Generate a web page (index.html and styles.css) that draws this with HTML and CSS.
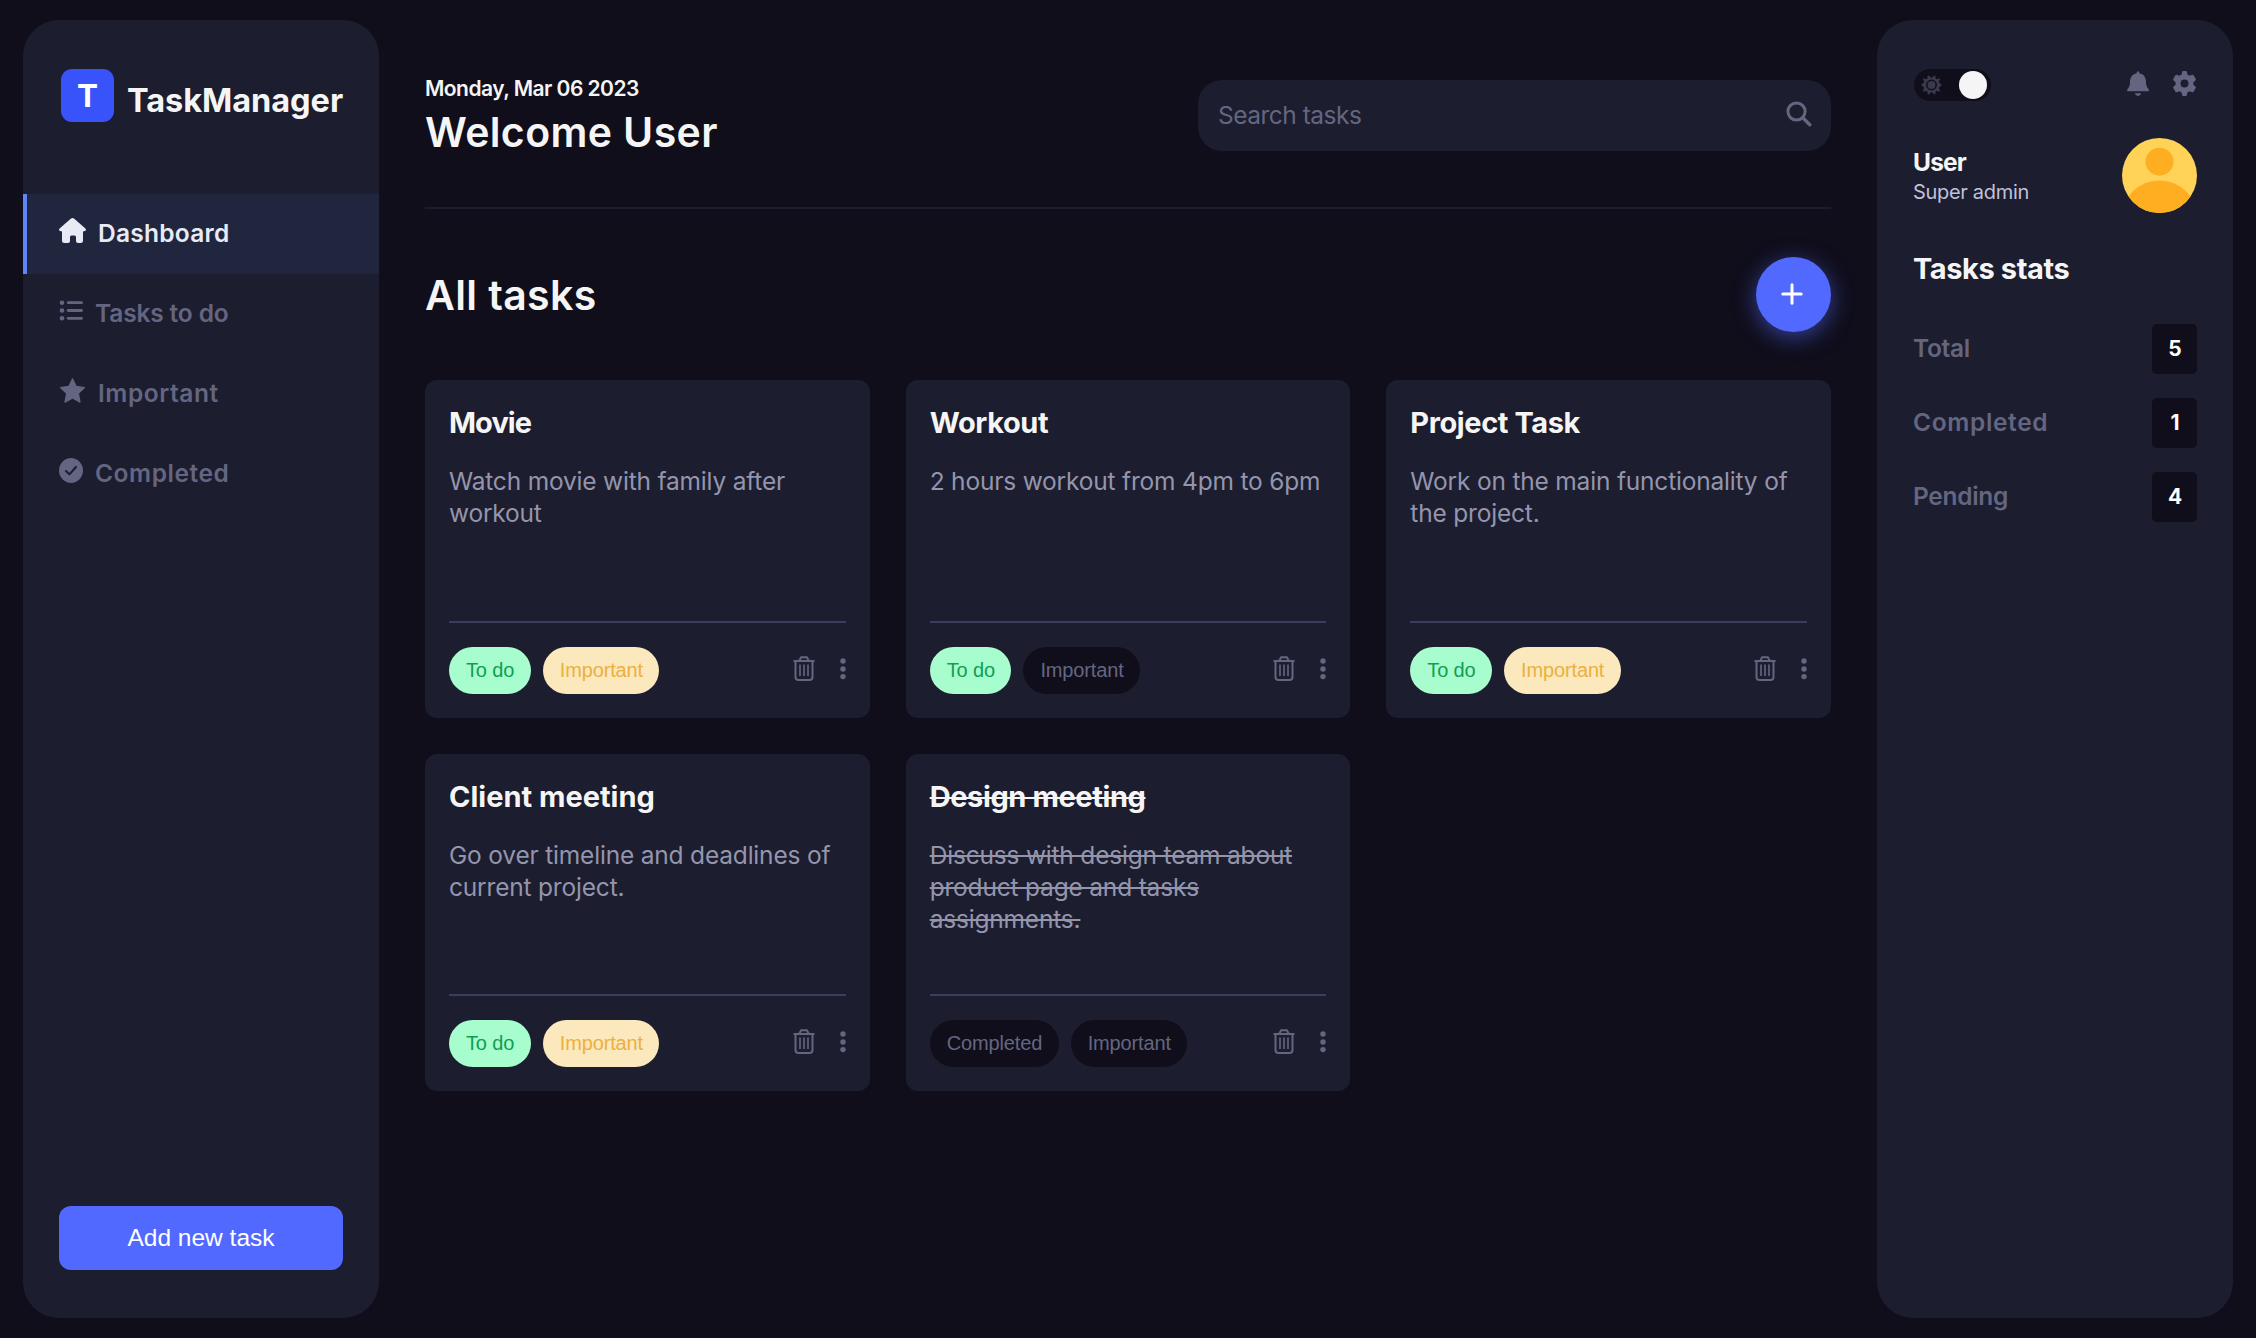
FILE: index.html
```html
<!DOCTYPE html>
<html lang="en">
<head>
<meta charset="utf-8">
<title>TaskManager</title>
<link rel="stylesheet" href="styles.css">
</head>
<body>
<svg class="defs" aria-hidden="true">
  <symbol id="trash" viewBox="0 0 22 25">
    <path d="M0.5 5H21.5M6 5L8.2 1.2H13.8L16 5M2.5 5V21Q2.5 24 5.5 24H16.5Q19.5 24 19.5 21V5" fill="none" stroke="currentColor" stroke-width="2"/>
    <path d="M7 8.5V20M11 8.5V20M15 8.5V20" stroke="currentColor" stroke-width="1.6"/>
  </symbol>
  <symbol id="dots" viewBox="0 0 6 22">
    <circle cx="3" cy="3" r="2.7"/><circle cx="3" cy="11" r="2.7"/><circle cx="3" cy="18.6" r="2.7"/>
  </symbol>
</svg>
<div class="app">
  <aside class="sidebar">
    <div class="brand">
      <span class="logo">T</span>
      <span class="brand-name">TaskManager</span>
    </div>
    <nav class="nav">
      <a class="nav-item active">
        <svg width="27" height="25" viewBox="0 0 27 25"><path d="M12 .6Q13.500-.5 15 .6L26.400 10.600Q27.300 11.700 26.800 12.600Q26.300 13.400 24 13.400V22.500Q24 25 21.500 25H19Q17 25 17 23V19Q17 17.500 15.500 17.500H12.500Q11 17.500 11 19V23Q11 25 9 25H5.500Q3 25 3 22.500V13.400Q.7 13.400 .2 12.600Q-.3 11.700 .6 10.600Z"/></svg>
        <span>Dashboard</span>
      </a>
      <a class="nav-item">
        <svg width="24" height="25" viewBox="0 0 24 25"><circle cx="3" cy="4.700" r="2.300"/><circle cx="3" cy="12.500" r="2.300"/><circle cx="3" cy="20.300" r="2.300"/><path d="M9.200 4.700H22.600M9.200 12.500H22.600M9.200 20.300H22.600" stroke="currentColor" stroke-width="2.800" stroke-linecap="round"/></svg>
        <span class="snug">Tasks to do</span>
      </a>
      <a class="nav-item">
        <svg width="27" height="25" viewBox="0 0 27 25"><path d="M13.500 .8L17.200 8.400L25.500 9.500L19.400 15.300L21 24.200L13.500 20L6 24.200L7.600 15.300L1.500 9.500L9.800 8.400Z" stroke="currentColor" stroke-width="1.200" stroke-linejoin="round"/></svg>
        <span class="wide">Important</span>
      </a>
      <a class="nav-item">
        <svg width="24" height="25" viewBox="0 0 24 25"><ellipse cx="12" cy="12.500" rx="12" ry="12.500"/><path class="cut" d="M7 13L10.400 16.400L17 9" fill="none" stroke-width="2" stroke-linecap="round" stroke-linejoin="round"/></svg>
        <span class="wide">Completed</span>
      </a>
    </nav>
    <button class="add-task">Add new task</button>
  </aside>

  <main class="main">
    <header class="header">
      <div>
        <div class="date">Monday, Mar 06 2023</div>
        <h1 class="heading">Welcome User</h1>
      </div>
      <div class="search">
        <span>Search tasks</span>
        <svg width="26" height="26" viewBox="0 0 26 26"><circle cx="10.500" cy="10.500" r="8.600" stroke="currentColor" stroke-width="3"/><path d="M16.800 16.800L23.800 23.800" stroke="currentColor" stroke-width="3.400" stroke-linecap="round"/></svg>
      </div>
    </header>
    <div class="section-head">
      <h2 class="heading">All tasks</h2>
      <button class="fab"><svg width="22" height="22" viewBox="0 0 22 22"><path d="M11 1.800V20.200M1.800 11H20.200" stroke="currentColor" stroke-width="3" stroke-linecap="round"/></svg></button>
    </div>
    <section class="grid">
      <article class="card">
        <h3 class="tight">Movie</h3>
        <p>Watch movie with family after workout</p>
        <footer><span class="tag todo">To do</span><span class="tag important">Important</span>
          <svg class="trash"><use href="#trash"/></svg><svg class="dots"><use href="#dots"/></svg></footer>
      </article>
      <article class="card">
        <h3>Workout</h3>
        <p>2 hours workout from 4pm to 6pm</p>
        <footer><span class="tag todo">To do</span><span class="tag">Important</span>
          <svg class="trash"><use href="#trash"/></svg><svg class="dots"><use href="#dots"/></svg></footer>
      </article>
      <article class="card">
        <h3>Project Task</h3>
        <p>Work on the main functionality of the project.</p>
        <footer><span class="tag todo">To do</span><span class="tag important">Important</span>
          <svg class="trash"><use href="#trash"/></svg><svg class="dots"><use href="#dots"/></svg></footer>
      </article>
      <article class="card">
        <h3 class="loose">Client meeting</h3>
        <p>Go over timeline and deadlines of current project.</p>
        <footer><span class="tag todo">To do</span><span class="tag important">Important</span>
          <svg class="trash"><use href="#trash"/></svg><svg class="dots"><use href="#dots"/></svg></footer>
      </article>
      <article class="card done">
        <h3>Design meeting</h3>
        <p>Discuss with design team about product page and tasks assignments.</p>
        <footer><span class="tag">Completed</span><span class="tag">Important</span>
          <svg class="trash"><use href="#trash"/></svg><svg class="dots"><use href="#dots"/></svg></footer>
      </article>
    </section>
  </main>

  <aside class="panel">
    <div class="tools">
      <div class="toggle">
        <svg width="21" height="20" viewBox="0 0 21 20"><path d="M10.500 3L14 0L14.900 4.200L19.300 3.300L17.800 7.200L21 10L17.800 12.800L19.300 16.700L14.900 15.800L14 20L10.500 17L7 20L6.100 15.800L1.700 16.700L3.200 12.800L0 10L3.200 7.200L1.700 3.300L6.100 4.200L7 0Z"/><circle class="ring" cx="10.500" cy="10" r="4.700" fill="none" stroke-width="1.500"/></svg>
        <span class="knob"></span>
      </div>
      <svg width="22" height="25" viewBox="0 0 22 25"><path d="M9.700 1.300Q11-1 12.300 1.300V2.200Q18.500 3.500 19 10V13Q19.500 16 21.600 18.200Q22.400 20.300 21 20.300H1Q-.4 20.300 .4 18.200Q2.500 16 3 13V10Q3.500 3.500 9.700 2.200ZM7.800 22.200H14.200Q13.500 25 11 25Q8.500 25 7.800 22.200Z"/></svg>
      <svg width="23" height="25" viewBox="0 0 23 25"><path fill-rule="evenodd" d="M10.200 0H12.800Q13.700 0 13.900 1L14.300 3.400L16.600 4.700L19 3.800Q20 3.500 20.600 4.300L22.700 7.900Q23.200 8.800 22.400 9.500L20.400 11.200V13.800L22.400 15.500Q23.200 16.200 22.700 17.100L20.600 20.700Q20 21.500 19 21.200L16.600 20.300L14.300 21.600L13.900 24Q13.700 25 12.800 25H10.200Q9.300 25 9.100 24L8.700 21.600L6.400 20.300L4 21.200Q3 21.500 2.400 20.700L.3 17.100Q-.2 16.200 .6 15.500L2.600 13.800V11.200L.6 9.500Q-.2 8.800 .3 7.900L2.400 4.300Q3 3.500 4 3.800L6.400 4.700L8.700 3.400L9.100 1Q9.300 0 10.200 0ZM11.500 8.500A4 4 0 1 0 11.500 16.500A4 4 0 1 0 11.500 8.500Z"/></svg>
    </div>
    <div class="profile">
      <div>
        <div class="user-name">User</div>
        <div class="role">Super admin</div>
      </div>
      <svg width="75" height="75" viewBox="0 0 75 75"><defs><clipPath id="face"><circle cx="37.500" cy="37.500" r="37.500"/></clipPath></defs><g clip-path="url(#face)"><rect width="75" height="75" fill="#ffd357"/><circle cx="37.500" cy="23.700" r="14" fill="#ffae22"/><ellipse cx="37.500" cy="80" rx="38" ry="37.500" fill="#ffae22"/></g></svg>
    </div>
    <h3 class="stats-title">Tasks stats</h3>
    <div class="stats">
      <div class="stat"><span>Total</span><b>5</b></div>
      <div class="stat"><span class="wide">Completed</span><b>1</b></div>
      <div class="stat"><span>Pending</span><b>4</b></div>
    </div>
  </aside>
</div>
</body>
</html>
```
FILE: styles.css
```css
* { box-sizing: border-box; margin: 0; }
body { background: #100e1b; color: #f5f5f5; font-family: Inter, sans-serif; font-size: 24.5px; }
svg { display: block; flex: none; fill: currentColor; }
.defs { display: none; }
button { border: 0; background: #5269ff; color: #fff; padding: 0; }

.app { display: grid; grid-template-columns: 356px 1fr 356px; height: 1338px; padding: 20px 23px; }

.sidebar, .panel { background: #1c1d2e; border-radius: 36px; display: flex; flex-direction: column; }

.brand { height: 174px; display: flex; align-items: flex-start; gap: 13px; padding: 49px 0 0 38px; }
.logo { width: 53px; height: 53px; border-radius: 11px; background: #3853fa; color: #fff; font: 700 31.5px/54px Inter, sans-serif; text-align: center; }
.brand-name { font-size: 32.5px; font-weight: 700; line-height: 40px; letter-spacing: -.05px; margin-top: 12px; }

.nav { flex: 1; }
.nav-item { display: flex; align-items: center; gap: 12px; height: 80px; padding: 0 0 2px 36px; color: #646681; font-weight: 600; letter-spacing: .26px; }
.nav-item svg { margin-bottom: 5px; }
.nav-item .cut { stroke: #1c1d2e; }
.nav-item.active { background: #20263e; color: #e8eaf6; box-shadow: inset 4px 0 #5f83f8; }
.wide { letter-spacing: .55px; }
.snug { letter-spacing: -.15px; }

.add-task { height: 64px; margin: 0 36px 48px; border-radius: 12px; font: 24.5px "Liberation Sans", Arial, sans-serif; }

.main { padding: 0 46px; }
.header { display: flex; justify-content: space-between; align-items: flex-start; height: 189px; padding-top: 56px; border-bottom: 2px solid #1c1d2e; }
.date { font-size: 21px; font-weight: 600; line-height: 26px; letter-spacing: -.53px; margin-bottom: 6px; }
.heading { font-size: 41px; font-weight: 600; line-height: 48px; letter-spacing: .38px; }
.search { display: flex; justify-content: space-between; align-items: center; width: 633px; height: 71px; margin-top: 4px; padding: 0 19px 2px 20px; border-radius: 24px; background: #1c1d2e; color: #646681; letter-spacing: -.5px; }
.search svg { fill: none; margin-bottom: 1px; }
.section-head { display: flex; justify-content: space-between; align-items: center; margin: 48px 0; }
.fab { display: flex; align-items: center; justify-content: center; width: 75px; height: 75px; border-radius: 50%; padding: 0 3px 2px 0; box-shadow: 0 5px 22px rgba(82, 105, 255, .55); }

.grid { display: grid; grid-template-columns: repeat(3, 1fr); grid-template-rows: 338px 337px; gap: 36px; }
.card { display: flex; flex-direction: column; background: #1c1d2e; border-radius: 12px; padding: 25px 24px 24px; }
.card h3, .stats-title { font-size: 29px; font-weight: 700; line-height: 36px; letter-spacing: -.4px; }
.card h3.tight { letter-spacing: -.95px; }
.card h3.loose { letter-spacing: 0; }
.card p { flex: 1; margin-top: 24px; color: #9495ad; line-height: 32px; letter-spacing: -.19px; }
.card footer { display: flex; align-items: flex-start; gap: 12px; height: 73px; padding-top: 24px; border-top: 2px solid #3c3d5e; }
.card.done h3, .card.done p { text-decoration: line-through; text-decoration-thickness: 2px; }
.tag { height: 47px; padding: 0 16.500px 0 17px; border-radius: 24px; background: #100e1b; color: #646681; font: 20px/46px "Liberation Sans", Arial, sans-serif; letter-spacing: -.14px; }
.tag.todo { background: #a7fdcd; color: #0e9f54; }
.tag.important { background: #fbe8bd; color: #ecb040; }
.trash { width: 22px; height: 25px; margin: 9px 13px 0 auto; color: #646681; }
.dots { width: 6px; height: 22px; margin-top: 11px; color: #646681; }

.panel { padding: 49px 36px 0; }
.tools { display: flex; align-items: center; height: 32px; color: #646681; }
.tools > svg { margin: 0 1px 4px 23px; }
.toggle { display: flex; align-items: center; justify-content: space-between; width: 77px; height: 32px; margin: 0 auto 0 1px; padding: 0 4px 0 7px; border-radius: 16px; background: #100e1b; color: #3a3a4e; }
.toggle .ring { stroke: #100e1b; }
.knob { width: 28px; height: 28px; border-radius: 50%; background: #f5f5f5; }
.profile { display: flex; justify-content: space-between; align-items: flex-start; margin-top: 37px; height: 75px; }
.user-name { font-weight: 700; line-height: 30px; letter-spacing: -.8px; margin: 9px 0 2px; }
.role { font-size: 20px; line-height: 26px; letter-spacing: -.31px; color: #c0c2db; }
.stats-title { margin: 38px 0 37px; }
.stats { display: grid; gap: 24px; }
.stat { display: flex; justify-content: space-between; color: #646681; font-weight: 600; line-height: 48px; letter-spacing: -.3px; }
.stat .wide { letter-spacing: .65px; }
.stat b { width: 45px; height: 50px; padding-left: 1px; border-radius: 5px; background: #100e1b; color: #fff; font-size: 21px; font-weight: 700; line-height: 50px; letter-spacing: 0; text-align: center; }
```
